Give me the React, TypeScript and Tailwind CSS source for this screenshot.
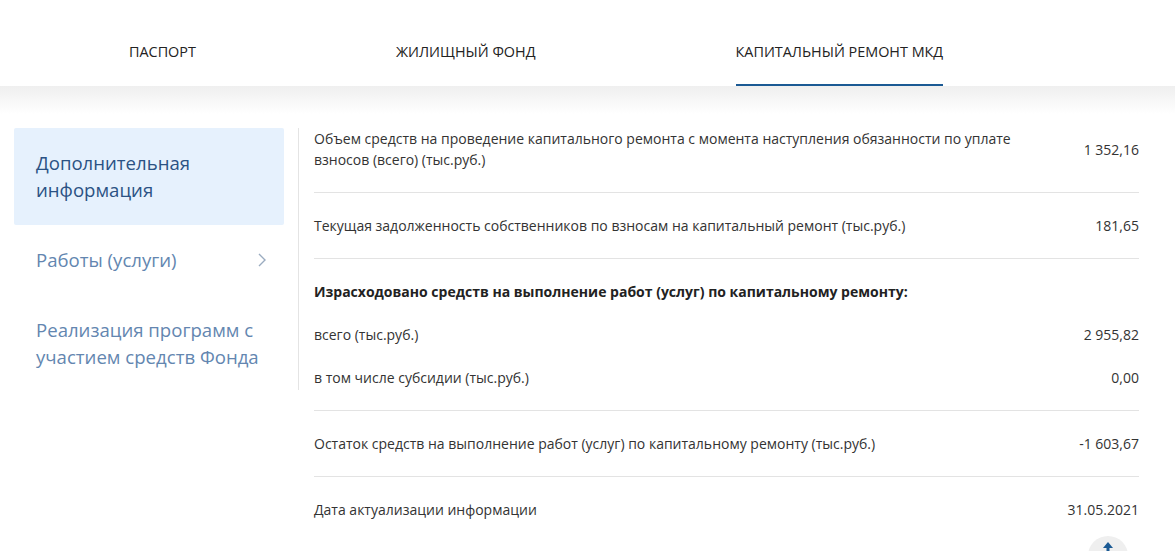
import React from "react";

const tabs = [
  { title: "Паспорт", active: false },
  { title: "Жилищный фонд", active: false },
  { title: "Капитальный ремонт МКД", active: true },
];

const menu = [
  { title: "Дополнительная информация", active: true, arrow: false },
  { title: "Работы (услуги)", active: false, arrow: true },
  { title: "Реализация программ с участием средств Фонда", active: false, arrow: false },
];

const Row = ({ label, value }: { label: string; value: string }) => (
  <div className="flex items-center justify-between">
    <span className="max-w-[730px]">{label}</span>
    <span className="whitespace-nowrap">{value}</span>
  </div>
);

const App = () => {
  return (
    <div
      className="relative min-h-screen overflow-hidden bg-white text-[#333333]"
      style={{ fontFamily: '"Open Sans", "Noto Sans", sans-serif' }}
    >
      {/* Tabs */}
      <header className="flex h-[86px] items-end gap-[200px] bg-white pl-[129px]">
        {tabs.map((tab) => (
          <div
            key={tab.title}
            className={`pb-[22px] text-[14.4px] uppercase leading-[20px] text-[#222222] ${
              tab.active ? "border-b-2 border-[#1b5a94]" : "border-b-2 border-transparent"
            }`}
          >
            {tab.title}
          </div>
        ))}
      </header>
      <div className="h-[28px] bg-linear-to-b from-[#efefef] to-white" />

      <main className="flex pt-[14px] pr-[36px] pl-[14px]">
        {/* Side menu */}
        <aside className="h-[262px] w-[285px] shrink-0 border-r border-[#e4e4e4] pr-[14px]">
          {menu.map((item) => (
            <div
              key={item.title}
              className={`flex items-center justify-between rounded-[2px] pt-[21px] pr-[18px] pb-[22px] pl-[22px] text-[18.6px] leading-[27px] ${
                item.active ? "bg-[#e6f1fd] text-[#2b5284]" : "text-[#6386b0]"
              }`}
            >
              <span>{item.title}</span>
              {item.arrow && (
                <svg width="8" height="14" viewBox="0 0 8 14" fill="none">
                  <path d="M1 1l6 6-6 6" stroke="#9aabc0" strokeWidth="1.4" />
                </svg>
              )}
            </div>
          ))}
        </aside>

        {/* Capital repair figures */}
        <section className="flex-1 pl-[15px] text-[14px] leading-[21px]">
          <div className="border-b border-[#e3e3e3] pb-[22px]">
            <Row
              label="Объем средств на проведение капитального ремонта с момента наступления обязанности по уплате взносов (всего) (тыс.руб.)"
              value="1 352,16"
            />
          </div>
          <div className="border-b border-[#e3e3e3] py-[22px]">
            <Row
              label="Текущая задолженность собственников по взносам на капитальный ремонт (тыс.руб.)"
              value="181,65"
            />
          </div>
          <div className="flex flex-col gap-[22px] border-b border-[#e3e3e3] py-[22px]">
            <div className="font-bold text-[#222222]">
              Израсходовано средств на выполнение работ (услуг) по капитальному ремонту:
            </div>
            <Row label="всего (тыс.руб.)" value="2 955,82" />
            <Row label="в том числе субсидии (тыс.руб.)" value="0,00" />
          </div>
          <div className="border-b border-[#e3e3e3] py-[22px]">
            <Row
              label="Остаток средств на выполнение работ (услуг) по капитальному ремонту (тыс.руб.)"
              value="-1 603,67"
            />
          </div>
          <div className="py-[22px]">
            <Row label="Дата актуализации информации" value="31.05.2021" />
          </div>
        </section>
      </main>

      {/* Scroll to top */}
      <button className="absolute top-[536px] left-[1088px] flex h-[40px] w-[40px] items-start justify-center rounded-full bg-[#efefef] pt-[5px]">
        <svg width="12" height="12" viewBox="0 0 12 12">
          <path d="M6 1L11 7H1z" fill="#1b5a94" />
          <rect x="4.5" y="6" width="3" height="6" fill="#1b5a94" />
        </svg>
      </button>
    </div>
  );
};

export default App;
